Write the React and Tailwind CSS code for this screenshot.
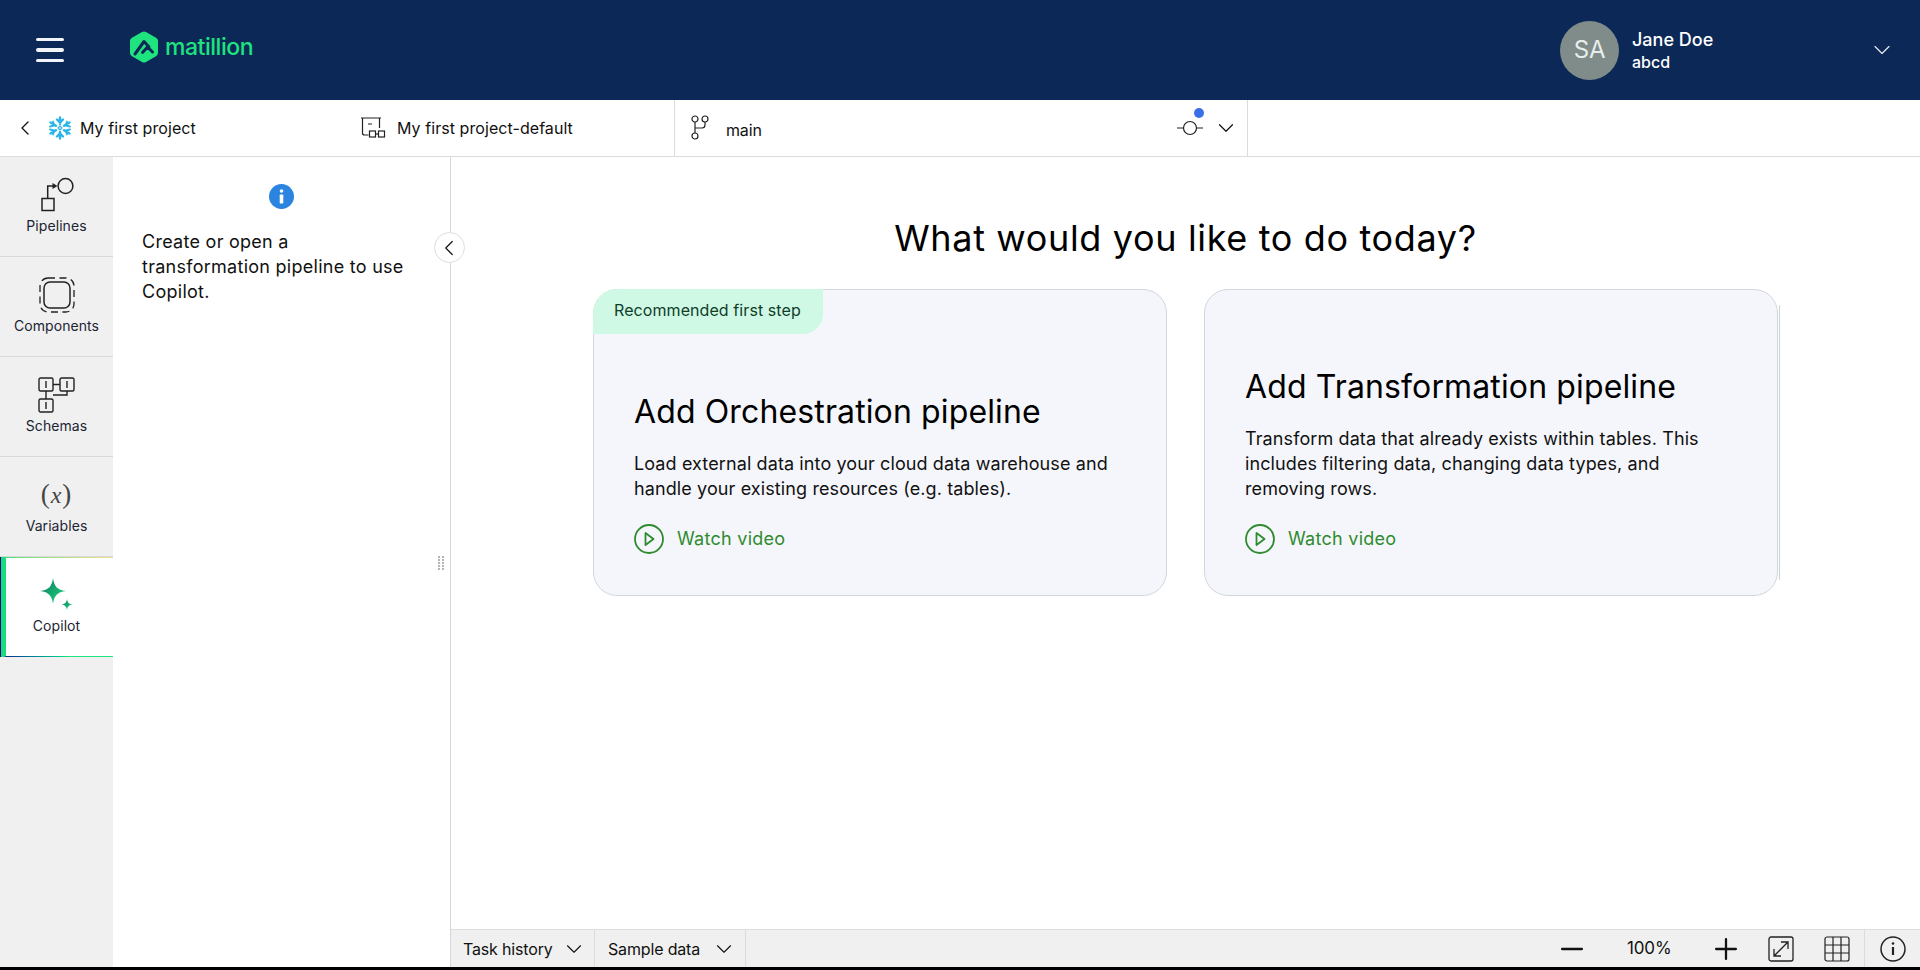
import { ChevronDown, ChevronLeft, Minus, Plus } from 'lucide-react';

const PipelinesIcon = () => (
  <svg width="36" height="36" viewBox="0 0 36 36" fill="none" stroke="#222" strokeWidth="1.5">
    <rect x="3" y="21.5" width="12" height="12" />
    <path d="M8.7 21V9h6" />
    <path d="M13.5 6l5 3-5 3z" fill="#222" stroke="none" />
    <circle cx="26.5" cy="9" r="7.4" />
  </svg>
);

const ComponentsIcon = () => (
  <svg width="36" height="36" viewBox="0 0 36 36" fill="none" stroke="#222">
    <rect x="5" y="5" width="26" height="26" rx="6" strokeWidth="1.5" />
    <rect x="1" y="1" width="34" height="34" rx="8" strokeWidth="1.3" strokeDasharray="7 4.5" />
  </svg>
);

const SchemasIcon = () => (
  <svg width="38" height="36" viewBox="0 0 38 36" fill="none" stroke="#222" strokeWidth="1.4">
    <rect x="1" y="1" width="14" height="13" rx="1.5" />
    <rect x="22" y="1" width="14" height="13" rx="1.5" />
    <rect x="1" y="22" width="14" height="13" rx="1.5" />
    <path d="M8 4v7M29 4v7M8 25v7M15 7.5h7M8 14v8M29 14v4h-14" />
  </svg>
);

const CopilotIcon = () => (
  <svg width="40" height="36" viewBox="0 0 40 36" fill="none">
    <defs>
      <linearGradient id="spark" x1="0" y1="0" x2="1" y2="1">
        <stop offset="0" stopColor="#0d6f5c" />
        <stop offset="1" stopColor="#1ee27f" />
      </linearGradient>
    </defs>
    <path d="M16 1c1 8 4 12 13 13-9 1-12 5-13 13-1-8-4-12-13-13 9-1 12-5 13-13z" fill="url(#spark)" />
    <path d="M30 22c.5 3.500 2 5 5.500 5.500-3.500.5-5 2-5.500 5.500-.5-3.500-2-5-5.500-5.500 3.500-.5 5-2 5.500-5.500z" fill="url(#spark)" />
  </svg>
);

const Snowflake = () => (
  <svg width="24" height="24" viewBox="0 0 24 24" fill="none" stroke="#29b5e8" strokeWidth="2.400" strokeLinecap="round">
    <path d="M12 1.500v6.500M12 16v6.500M9 3.500l3 3 3-3M9 20.500l3-3 3 3" />
    <path d="M2.500 6.500l5.500 3.200M16 14.300l5.500 3.200M2.500 17.500l5.500-3.200M16 9.700l5.500-3.200" />
    <path d="M2 10.500l4.200-1-1.200-4M22 13.500l-4.200 1 1.200 4M2 13.500l4.200 1-1.200 4M22 10.500l-4.200-1 1.200-4" strokeWidth="1.800" />
    <path d="M12 10l2 2-2 2-2-2z" strokeWidth="1.200" />
  </svg>
);

const PlayCircle = () => (
  <svg width="30" height="30" viewBox="0 0 30 30" fill="none" stroke="#2e8b2e" strokeWidth="1.800">
    <circle cx="15" cy="15" r="14" />
    <path d="M11.500 9v12l8-6z" strokeLinejoin="round" />
  </svg>
);

const NavItem = ({ icon, label }) => (
  <div className="h-[100px] flex flex-col items-center pt-[20px] border-b border-[#d9d9d9]">
    <div className="h-[36px] flex items-center justify-center">{icon}</div>
    <span className="mt-[3px] text-[14px] leading-[20px] tracking-[0.005em] text-[#1c2433]">{label}</span>
  </div>
);

const PipelineCard = ({ title, children, badge }) => (
  <div className="relative flex-1 h-[307px] rounded-[24px] border border-[#d2d6df] bg-[#f5f6fb] flex flex-col justify-end px-[40px] pb-[41px]">
    {badge && (
      <div className="absolute -left-px -top-px h-[45px] w-[230px] rounded-tl-[24px] rounded-br-[20px] bg-[#cff9e4] pl-[21px] text-[16px] leading-[43px] tracking-[0.005em] text-[#0f3d2a]">
        {badge}
      </div>
    )}
    <h2 className="text-[32px] leading-[40px] tracking-[0.004em] font-normal text-black">{title}</h2>
    <p className="mt-[19px] text-[18px] leading-[25px] tracking-[0.006em] text-[#111]">{children}</p>
    <div className="mt-[23px] flex items-center gap-[13px] text-[18px] leading-[30px] tracking-[0.015em] text-[#2e8b2e]">
      <PlayCircle />
      <span>Watch video</span>
    </div>
  </div>
);

export default function App() {
  return (
    <div className="h-[970px] overflow-hidden bg-black font-['Inter',sans-serif] tracking-[-0.01em]">
      <div className="h-[967px] bg-white flex flex-col">
        <header className="h-[100px] shrink-0 bg-[#0c2857] flex items-center pl-[36px] pr-[30px] text-white">
          <div className="w-[28px] flex flex-col gap-[7px]">
            <div className="h-[3.500px] rounded-full bg-[#f2f4f8]" />
            <div className="h-[3.500px] rounded-full bg-[#f2f4f8]" />
            <div className="h-[3.500px] rounded-full bg-[#f2f4f8]" />
          </div>
          <div className="ml-[66px] mb-[6px] flex items-center gap-[7px]">
            <svg width="28" height="32" viewBox="0 0 28 32">
              <path d="M12 1L2 6.800a3.500 3.500 0 0 0-2 3.200v12a3.500 3.500 0 0 0 2 3.200L12 31a4 4 0 0 0 4 0l10-5.800a3.500 3.500 0 0 0 2-3.200V10a3.500 3.500 0 0 0-2-3.200L16 1a4 4 0 0 0-4 0z" fill="#1ee37f" />
              <path d="M5 23L14 10.500L19 16M12.500 21.500l5-5.500 5 5" fill="none" stroke="#0c2857" strokeWidth="3" strokeLinecap="round" strokeLinejoin="round" />
            </svg>
            <span className="text-[23px] leading-[32px] font-medium text-[#1ee37f] tracking-[-0.02em]">matillion</span>
          </div>
          <div className="ml-auto flex items-center">
            <div className="h-[59px] w-[59px] rounded-full bg-[#7f8c8a] flex items-center justify-center text-[24px] text-[#e8ecea]">SA</div>
            <div className="ml-[13px] w-[236px] font-medium tracking-normal">
              <div className="text-[18px] leading-[24px]">Jane Doe</div>
              <div className="text-[16px] leading-[20px]">abcd</div>
            </div>
            <ChevronDown size={28} strokeWidth={1} className="-mr-[6px] text-[#e8ecf2]" />
          </div>
        </header>

        <div className="h-[57px] shrink-0 border-b border-[#dcdcdc] flex items-center text-[16px] text-[#111]">
          <div className="w-[674px] flex items-center tracking-[0.004em]">
            <ChevronLeft size={24} strokeWidth={1.300} className="ml-[13px]" />
            <div className="ml-[11px]"><Snowflake /></div>
            <span className="ml-[8px] w-[280px]">My first project</span>
            <svg width="26" height="24" viewBox="0 0 26 24" fill="none" stroke="#222" strokeWidth="1.200">
              <path d="M1 2h20M2.500 2v15a2 2 0 0 0 2 2h4M19.500 2v10M8 8h4" />
              <rect x="9.500" y="15" width="6" height="6" />
              <rect x="18.500" y="15" width="6" height="6" />
              <path d="M15.500 18h3" />
            </svg>
            <span className="ml-[11px]">My first project-default</span>
          </div>
          <div className="relative h-full w-[574px] border-x border-[#dcdcdc] flex items-center pl-[16px]">
            <svg width="18" height="26" viewBox="0 0 18 26" fill="none" stroke="#222" strokeWidth="1.200">
              <circle cx="4" cy="4" r="3" />
              <circle cx="14" cy="4" r="3" />
              <circle cx="4" cy="21" r="3" />
              <path d="M4 7v11M4 13h7a3 3 0 0 0 3-3V7" />
            </svg>
            <span className="ml-[17px] mt-[3px]">main</span>
            <div className="ml-auto mr-[8px] flex items-center gap-[10px]">
              <svg width="26" height="20" viewBox="0 0 26 20" fill="none" stroke="#222" strokeWidth="1.200">
                <circle cx="13" cy="10" r="6.500" />
                <path d="M0 10h6.500M19.500 10h6.500" />
              </svg>
              <ChevronDown size={26} strokeWidth={1.100} />
            </div>
            <div className="absolute left-[519px] top-[8px] h-[10px] w-[10px] rounded-full bg-[#3b6fe8]" />
          </div>
        </div>

        <div className="flex-1 min-h-0 flex">
          <nav className="w-[113px] shrink-0 bg-[#f0f0f0]">
            <NavItem icon={<PipelinesIcon />} label="Pipelines" />
            <NavItem icon={<ComponentsIcon />} label="Components" />
            <NavItem icon={<SchemasIcon />} label="Schemas" />
            <NavItem
              icon={
                <span className="-mt-[2px] font-['Liberation_Serif',serif] text-[27px] font-light text-[#444] tracking-[1px]">
                  (<span className="italic text-[24px]">x</span>)
                </span>
              }
              label="Variables"
            />
            <div className="relative h-[100px] bg-white flex flex-col items-center">
              <div className="h-px w-full bg-gradient-to-r from-[#1ee37f] to-[#f2dd8c]" />
              <div className="pt-[19px] h-[55px] flex items-center justify-center"><CopilotIcon /></div>
              <span className="mt-[3px] text-[14px] leading-[20px] tracking-[0.005em] text-[#1c2433]">Copilot</span>
              <div className="absolute bottom-0 left-0 h-px w-full bg-gradient-to-r from-[#00008b] to-[#1ee37f] to-60%" />
              <div className="absolute left-0 top-0 bottom-0 w-[6px] rounded-r-[2px] border-l border-[#00008b] bg-[#1bdc7b]" />
            </div>
          </nav>

          <aside className="relative w-[338px] shrink-0 border-r border-[#d6d6d6] px-[29px] pt-[27px]">
            <div className="flex justify-center">
              <div className="h-[25px] w-[25px] rounded-full bg-[#2b84e0] flex items-center justify-center">
                <svg width="5" height="15" viewBox="0 0 5 15" fill="white">
                  <circle cx="2.500" cy="2" r="1.800" />
                  <rect x="0.700" y="5.500" width="3.600" height="9" rx="0.800" />
                </svg>
              </div>
            </div>
            <p className="mt-[20px] text-[18px] leading-[25px] tracking-[0.015em] text-[#111]">
              Create or open a<br />transformation pipeline to use<br />Copilot.
            </p>
            <div className="absolute right-[-15px] top-[75px] h-[31px] w-[31px] rounded-full border border-[#dedede] bg-white flex items-center justify-center">
              <ChevronLeft size={26} strokeWidth={1.100} className="-ml-[2px] text-[#111]" />
            </div>
            <div className="absolute right-[6px] top-[399px] grid grid-cols-2 gap-x-[2px] gap-y-[1px]">
              {[0, 1, 2, 3, 4, 5, 6, 7, 8, 9].map((i) => (
                <div key={i} className="h-[2px] w-[2px] bg-[#b5b5b5]" />
              ))}
            </div>
          </aside>

          <main className="flex-1 min-w-0 flex flex-col">
            <div className="flex-1 min-h-0 flex flex-col items-center">
              <h1 className="mt-[57px] text-[36px] leading-[48px] tracking-[0.018em] font-normal text-black">What would you like to do today?</h1>
              <div className="relative mt-[27px] w-[1185px] flex gap-[37px]">
                <PipelineCard title="Add Orchestration pipeline" badge="Recommended first step">
                  Load external data into your cloud data warehouse and<br />handle your existing resources (e.g. tables).
                </PipelineCard>
                <PipelineCard title="Add Transformation pipeline">
                  Transform data that already exists within tables. This<br />includes filtering data, changing data types, and<br />removing rows.
                </PipelineCard>
                <div className="absolute right-[-2px] top-[16px] bottom-[16px] w-px bg-[#c9d3cf]" />
              </div>
            </div>

            <footer className="h-[38px] shrink-0 border-t border-[#dcdcdc] bg-[#f0f0f0] flex items-center text-[16px] text-[#111]">
              <div className="h-full w-[144px] border-r border-[#dcdcdc] flex items-center pl-[12px] gap-[8px]">
                <span>Task history</span>
                <ChevronDown size={26} strokeWidth={1} />
              </div>
              <div className="h-full w-[151px] border-r border-[#dcdcdc] flex items-center pl-[13px] gap-[11px]">
                <span>Sample data</span>
                <ChevronDown size={26} strokeWidth={1} />
              </div>
              <div className="ml-auto h-full flex items-center">
                <Minus size={34} strokeWidth={1.600} />
                <span className="ml-[38px] w-[42px] text-[17px]">100%</span>
                <Plus size={34} strokeWidth={1.600} className="ml-[40px]" />
                <svg className="ml-[25px]" width="26" height="26" viewBox="0 0 26 26" fill="none" stroke="#222" strokeWidth="1.300">
                  <rect x="1" y="1" width="24" height="24" rx="2" />
                  <path d="M6 20L20 6M13 6h7v7M6 13v7h7" />
                </svg>
                <svg className="ml-[30px]" width="26" height="26" viewBox="0 0 26 26" fill="none" stroke="#222" strokeWidth="1.200">
                  <rect x="1" y="1" width="24" height="24" rx="2" />
                  <path d="M9 1v24M17 1v24M1 9h24M1 17h24" />
                </svg>
                <div className="ml-[14px] h-full w-[56px] border-l border-[#dcdcdc] flex items-center justify-center">
                  <svg width="26" height="26" viewBox="0 0 26 26" fill="none" stroke="#222" strokeWidth="1.500">
                    <circle cx="13" cy="13" r="12" />
                    <path d="M13 11v8" strokeWidth="2.200" />
                    <circle cx="13" cy="7.500" r="1.300" fill="#222" stroke="none" />
                  </svg>
                </div>
              </div>
            </footer>
          </main>
        </div>
      </div>
    </div>
  );
}
